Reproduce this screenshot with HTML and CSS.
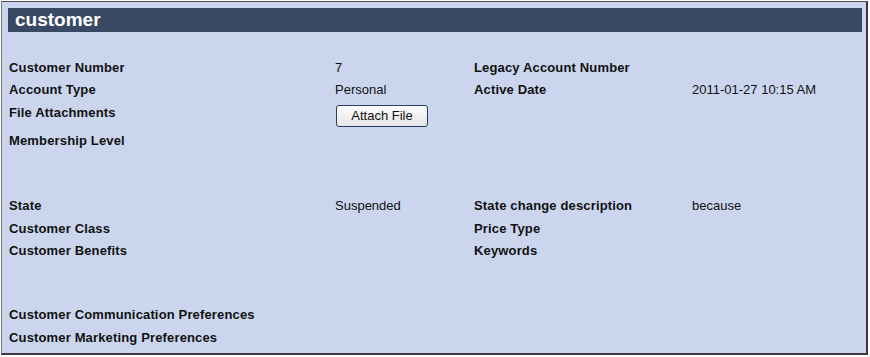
FILE: index.html
```html
<!DOCTYPE html>
<html lang="en">
<head>
    <meta charset="UTF-8">
    <meta name="viewport" content="width=device-width, initial-scale=1.0">
    <title>customer</title>
    <link rel="stylesheet" href="styles.css">
</head>
<body>
<div class="panel">
    <h1 class="panel-title">customer</h1>

    <!-- account -->
    <div class="section section-account">
        <div class="row">
            <span class="label">Customer Number</span>
            <span class="value">7</span>
            <span class="label">Legacy Account Number</span>
            <span class="value"></span>
        </div>
        <div class="row">
            <span class="label">Account Type</span>
            <span class="value">Personal</span>
            <span class="label">Active Date</span>
            <span class="value">2011-01-27 10:15 AM</span>
        </div>
        <div class="row row-tall">
            <span class="label">File Attachments</span>
            <span class="value"><button type="button" class="attach-button">Attach File</button></span>
        </div>
        <div class="row">
            <span class="label">Membership Level</span>
            <span class="value"></span>
        </div>
    </div>

    <!-- state -->
    <div class="section section-state">
        <div class="row">
            <span class="label">State</span>
            <span class="value">Suspended</span>
            <span class="label">State change description</span>
            <span class="value">because</span>
        </div>
        <div class="row">
            <span class="label">Customer Class</span>
            <span class="value"></span>
            <span class="label">Price Type</span>
            <span class="value"></span>
        </div>
        <div class="row">
            <span class="label">Customer Benefits</span>
            <span class="value"></span>
            <span class="label">Keywords</span>
            <span class="value"></span>
        </div>
    </div>

    <!-- preferences -->
    <div class="section section-prefs">
        <div class="row">
            <span class="label">Customer Communication Preferences</span>
        </div>
        <div class="row">
            <span class="label">Customer Marketing Preferences</span>
        </div>
    </div>
</div>
</body>
</html>
```

FILE: styles.css
```css
* {
    margin: 0;
    padding: 0;
    box-sizing: border-box;
}

body {
    background-color: #fff;
    font-family: "Liberation Sans", Arial, sans-serif;
    font-size: 13px;
    color: #111;
}

.panel {
    margin: 1px 2px 0 1px;
    height: 354px;
    background-color: #cbd6ee;
    border-top: 1px solid #4a4a4a;
    border-left: 1px solid #7a7a7a;
    border-right: 2px solid #3a3a3a;
    border-bottom: 2px solid #3a3a3a;
    padding: 6px 4px 0 6px;
}

.panel-title {
    background-color: #3a4963;
    color: #fff;
    font-size: 19px;
    font-weight: bold;
    height: 24px;
    line-height: 24px;
    padding-left: 7px;
}

.section {
    padding-left: 1px;
}

.section-account {
    margin-top: 24.5px;
}

.section-state {
    margin-top: 43.25px;
}

.section-prefs {
    margin-top: 41.5px;
}

.row {
    display: grid;
    grid-template-columns: 326px 139px 218px 1fr;
    height: 22.5px;
    line-height: 22.5px;
    align-items: start;
}

.row-tall {
    height: 28px;
}

.label {
    font-weight: bold;
    letter-spacing: 0.15px;
    white-space: nowrap;
}

.section-prefs .row {
    grid-template-columns: 1fr;
}

.attach-button {
    display: block;
    margin: 3.5px 0 0 1px;
    width: 92px;
    height: 22px;
    font-family: "Liberation Sans", Arial, sans-serif;
    font-size: 13px;
    line-height: 20px;
    color: #111;
    background: linear-gradient(#fdfdfd, #e6e6e6);
    border: 1px solid #2b3f5c;
    border-radius: 3px;
    cursor: pointer;
}
```
